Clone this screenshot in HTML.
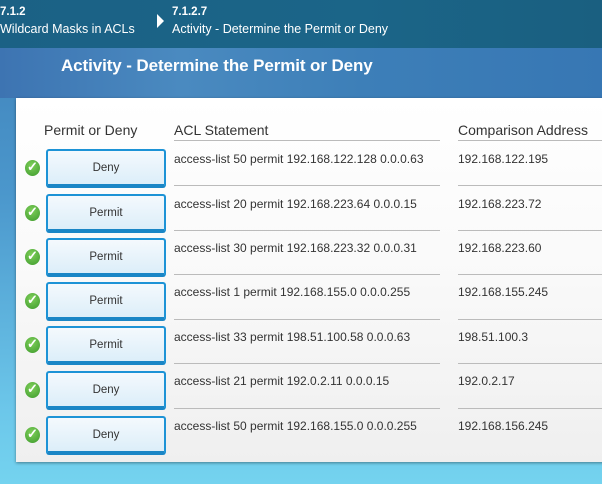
<!DOCTYPE html><html><head><style>
body{margin:0;width:602px;height:484px;overflow:hidden;position:relative;font-family:"Liberation Sans",sans-serif;background:linear-gradient(180deg,#3e80b8 0%,#4b97cc 40%,#6cc7ea 85%,#74d3ef 100%);}
.top{position:absolute;left:0;top:0;width:602px;height:48px;background:linear-gradient(90deg,#1b6185,#1b6588 60%,#1a5f80);color:#fff;font-size:12.5px}
.band{position:absolute;left:0;top:48px;width:602px;height:50px;background:linear-gradient(90deg,#3d74b2,#4a8ac0 30%,#3d7fb8 60%,#3777b4)}
.panel{position:absolute;left:16px;top:98px;width:600px;height:364px;background:linear-gradient(180deg,#fff 0%,#f9f9f9 50%,#efefef 100%);box-shadow:0 1px 3px rgba(0,0,0,.4)}
.a{position:absolute;white-space:nowrap}
.btn{position:absolute;left:46px;width:116px;height:33px;border:2px solid #1d93d6;border-bottom:4px solid #1a86c6;border-radius:3px;background:linear-gradient(180deg,#f4f9fd,#dceef9);font-size:11.5px;color:#333;text-align:center;line-height:35px}
.chk{position:absolute;left:25px;width:15px;height:16px;border-radius:50%;background:radial-gradient(circle at 45% 35%,#7fcf5a,#3d9a2c);}
.chk:after{content:"✓";position:absolute;left:2px;top:-1px;color:#fff;font-size:13px;font-weight:bold}
.h{font-size:14px;color:#333}
.t{font-size:12px;color:#333}
.l{position:absolute;height:1px;background:#bbb}
</style></head><body>
<div class="top">
<div class="a" style="left:0;top:6px;font-weight:bold;font-size:11.5px">7.1.2</div>
<div class="a" style="left:0;top:22px">Wildcard Masks in ACLs</div>
<div class="a" style="left:157px;top:14px;width:0;height:0;border-left:7px solid #fff;border-top:7px solid transparent;border-bottom:7px solid transparent"></div>
<div class="a" style="left:172px;top:6px;font-weight:bold;font-size:11.5px">7.1.2.7</div>
<div class="a" style="left:172px;top:22px">Activity - Determine the Permit or Deny</div>
</div>
<div class="band"><div class="a" style="left:61px;top:8px;color:#fff;font-size:17px;font-weight:bold;letter-spacing:-0.1px">Activity - Determine the Permit or Deny</div></div>
<div class="panel"></div>
<div class="a h" style="left:44px;top:122px">Permit or Deny</div>
<div class="a h" style="left:174px;top:122px">ACL Statement</div>
<div class="a h" style="left:458px;top:122px">Comparison Address</div>
<div class="l" style="left:174px;top:140px;width:266px"></div>
<div class="l" style="left:458px;top:140px;width:144px"></div>

<div class="l" style="left:174px;top:185px;width:266px"></div><div class="l" style="left:458px;top:185px;width:144px"></div>
<div class="l" style="left:174px;top:230px;width:266px"></div><div class="l" style="left:458px;top:230px;width:144px"></div>
<div class="l" style="left:174px;top:274px;width:266px"></div><div class="l" style="left:458px;top:274px;width:144px"></div>
<div class="l" style="left:174px;top:319px;width:266px"></div><div class="l" style="left:458px;top:319px;width:144px"></div>
<div class="l" style="left:174px;top:363px;width:266px"></div><div class="l" style="left:458px;top:363px;width:144px"></div>
<div class="l" style="left:174px;top:408px;width:266px"></div><div class="l" style="left:458px;top:408px;width:144px"></div>

<div class="chk" style="top:160px"></div><div class="btn" style="top:149px">Deny</div>
<div class="a t" style="left:174px;top:152px">access-list 50 permit 192.168.122.128 0.0.0.63</div><div class="a t" style="left:458px;top:152px">192.168.122.195</div>
<div class="chk" style="top:205px"></div><div class="btn" style="top:194px">Permit</div>
<div class="a t" style="left:174px;top:197px">access-list 20 permit 192.168.223.64 0.0.0.15</div><div class="a t" style="left:458px;top:197px">192.168.223.72</div>
<div class="chk" style="top:249px"></div><div class="btn" style="top:238px">Permit</div>
<div class="a t" style="left:174px;top:241px">access-list 30 permit 192.168.223.32 0.0.0.31</div><div class="a t" style="left:458px;top:241px">192.168.223.60</div>
<div class="chk" style="top:293px"></div><div class="btn" style="top:282px">Permit</div>
<div class="a t" style="left:174px;top:285px">access-list 1 permit 192.168.155.0 0.0.0.255</div><div class="a t" style="left:458px;top:285px">192.168.155.245</div>
<div class="chk" style="top:337px"></div><div class="btn" style="top:326px">Permit</div>
<div class="a t" style="left:174px;top:330px">access-list 33 permit 198.51.100.58 0.0.0.63</div><div class="a t" style="left:458px;top:330px">198.51.100.3</div>
<div class="chk" style="top:382px"></div><div class="btn" style="top:371px">Deny</div>
<div class="a t" style="left:174px;top:374px">access-list 21 permit 192.0.2.11 0.0.0.15</div><div class="a t" style="left:458px;top:374px">192.0.2.17</div>
<div class="chk" style="top:427px"></div><div class="btn" style="top:416px">Deny</div>
<div class="a t" style="left:174px;top:419px">access-list 50 permit 192.168.155.0 0.0.0.255</div><div class="a t" style="left:458px;top:419px">192.168.156.245</div>
</body></html>
